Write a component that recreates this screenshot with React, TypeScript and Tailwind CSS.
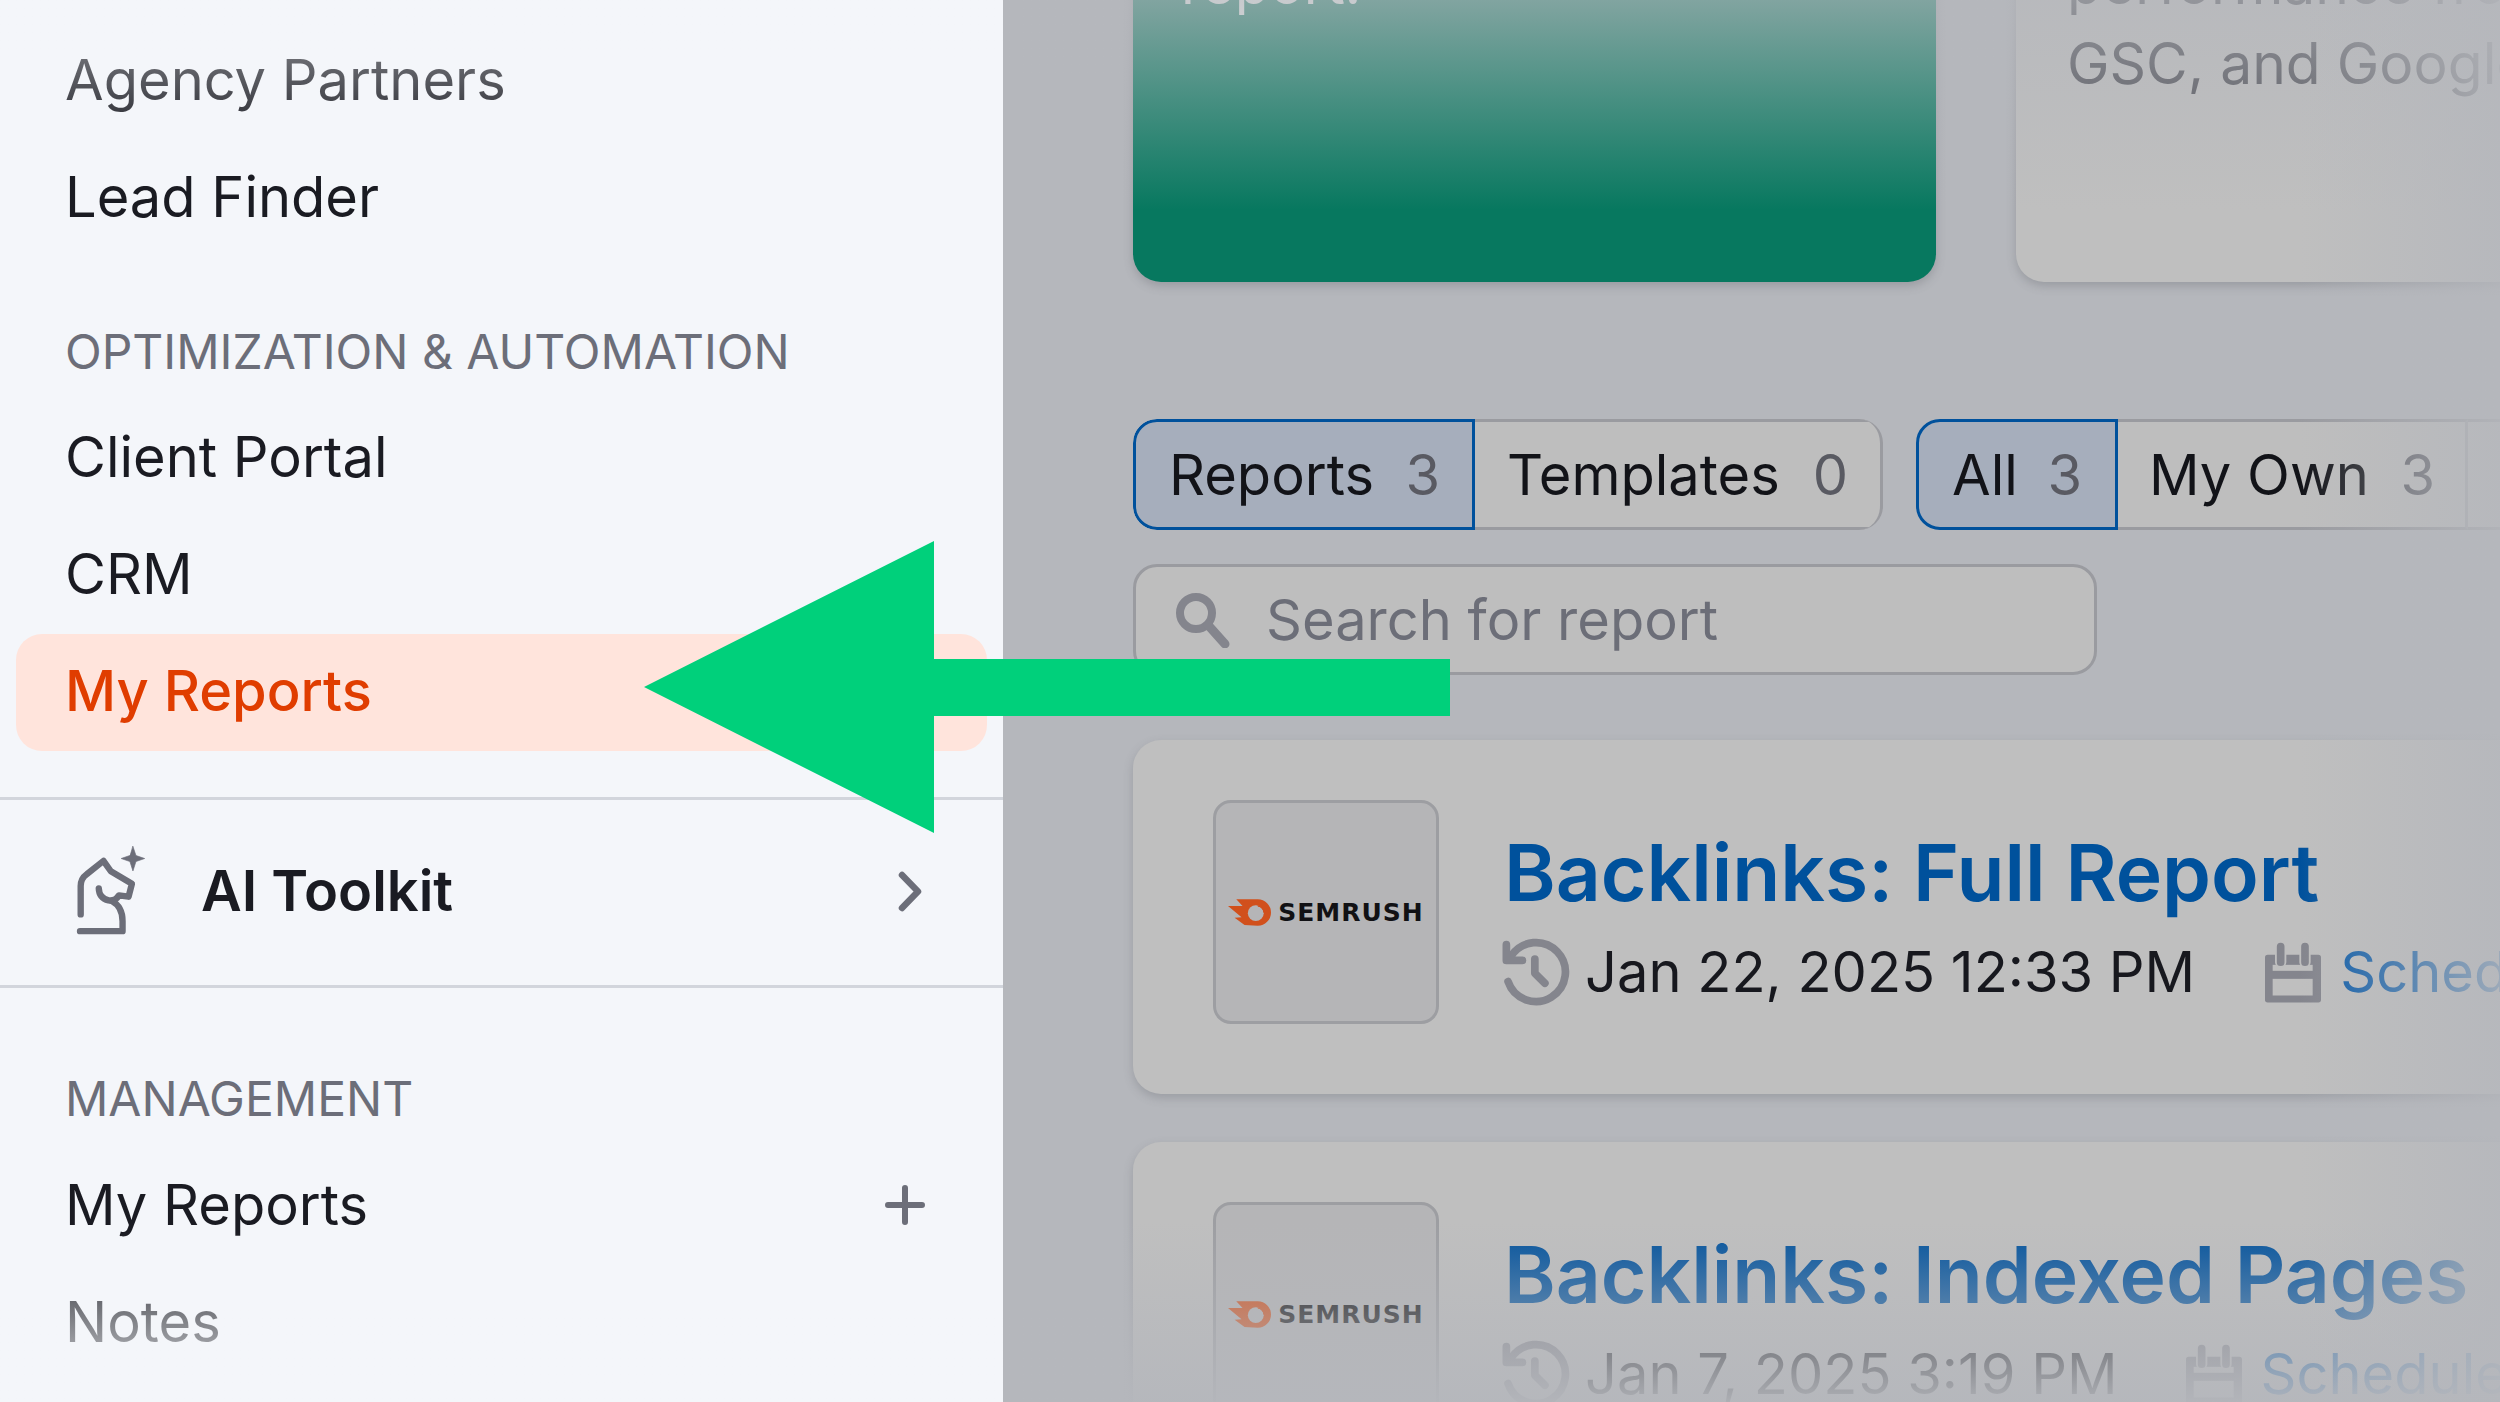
import React from "react";

const font = { fontFamily: '"Inter", "Noto Sans", sans-serif' };

function SideItem({ label, color = "text-[#1a1b22]" }: { label: string; color?: string }) {
  return <div className={`h-[117px] flex items-center pl-[65px] text-[56px] leading-none ${color}`}>{label}</div>;
}

function Heading({ label, className }: { label: string; className: string }) {
  return <div className={`pl-[65px] text-[48px] leading-none text-[#6c6e79] ${className}`}>{label}</div>;
}

function HorseIcon() {
  return (
    <svg viewBox="105 75 215 280" className="w-[72px] h-[94px]" fill="none" stroke="#6c6e79" strokeWidth="19" strokeLinecap="round" strokeLinejoin="round">
      <path d="M122 285 V200 Q122 178 140 165 L190 125 L212 156 L275 193 L265 232 L236 228 Q226 246 205 243 Q177 236 176 207" />
      <path d="M215 245 Q247 262 247 305 V335 H120" />
      <path d="M278 82 L287 109 L313 118 L287 127 L278 155 L269 127 L243 118 L269 109 Z" fill="#6c6e79" strokeWidth="2" />
    </svg>
  );
}

function SemrushLogo() {
  return (
    <div className="flex items-center gap-[7px]">
      <svg viewBox="80 325 130 80" className="w-[43px] h-[27px] shrink-0">
        <path d="M105 325 H170 A40 40 0 1 1 170 405 L130 403 L100 381 L121 379 L80 345 L124 345 Z" fill="#d1501c" />
        <circle cx="164" cy="367" r="24" fill="#b5b5b7" />
        <path d="M170 345 A22 22 0 0 1 189 365 A26 26 0 0 0 170 345 Z" fill="#d1501c" stroke="#d1501c" strokeWidth="3" />
      </svg>
      <span className="text-[25px] leading-none font-bold tracking-[1px] text-[#111114]" style={{ fontFamily: '"DejaVu Sans", sans-serif' }}>SEMRUSH</span>
    </div>
  );
}

function ClockIcon() {
  return (
    <svg viewBox="58 52 212 212" className="w-[71px] h-[71px] shrink-0" fill="none" stroke="#84858d" strokeWidth="23" strokeLinecap="round" strokeLinejoin="round">
      <path d="M85 185 A88 88 0 1 0 95 108" />
      <path d="M80 75 V122 H128" />
      <path d="M165 118 V160 L195 190" />
    </svg>
  );
}

function CalendarIcon() {
  return (
    <svg viewBox="75 62 168 182" className="w-[56px] h-[61px] shrink-0">
      <rect x="75" y="100" width="168" height="143" rx="8" fill="#84858d" />
      <rect x="98" y="130" width="120" height="18" fill="#bfbfbf" />
      <rect x="98" y="172" width="120" height="50" fill="#bfbfbf" />
      <path d="M122 75 V122 M195 75 V122" stroke="#bfbfbf" strokeWidth="34" strokeLinecap="round" />
      <path d="M122 75 V122 M195 75 V122" stroke="#84858d" strokeWidth="23" strokeLinecap="round" />
    </svg>
  );
}

function ReportCard({ title, date, gap }: { title: string; date: string; gap: string }) {
  return (
    <div className="w-[1500px] h-[354px] shrink-0 bg-[#bfbfbf] rounded-l-[28px] shadow-[0_4px_10px_rgba(90,92,100,0.28)] flex items-start pl-[80px] pt-[60px]">
      <div className="w-[226px] h-[224px] shrink-0 bg-[#b5b5b7] border-[3px] border-[#9d9ea2] rounded-[18px] flex items-center justify-center">
        <SemrushLogo />
      </div>
      <div className="ml-[65px]">
        <div className="h-[90px] flex items-center whitespace-nowrap text-[78.5px] leading-none font-semibold text-[#00519c] mt-[28px]">{title}</div>
        <div className="flex items-center h-[80px] mt-[14px] whitespace-nowrap text-[56px] leading-none text-[#17181e]">
          <span className="-ml-[5px]"><ClockIcon /></span>
          <span className="ml-[15px]">{date}</span>
          <span className={gap}><CalendarIcon /></span>
          <span className="ml-[19px] text-[#0b5ba8]">Schedule</span>
        </div>
      </div>
    </div>
  );
}

function Tab({ label, count, active, className }: { label: string; count: string; active?: boolean; className: string }) {
  return (
    <div className={`h-[111px] flex items-center justify-between shrink-0 text-[56px] leading-none text-[#121318] ${active ? "bg-[#a6aebc] border-[3px] border-[#00519c]" : "border-y-[3px] border-[#9a9ba0]"} ${className}`}>
      <span>{label}</span>
      <span className="text-[#595a62]">{count}</span>
    </div>
  );
}

export default function App() {
  return (
    <div className="relative w-[2500px] h-[1402px] flex overflow-hidden bg-[#b5b7bc]" style={font}>
      <aside className="relative w-[1003px] shrink-0 h-full bg-[#f4f6fa] overflow-hidden">
        <div className="pt-[21px]">
          <SideItem label="Agency Partners" />
          <SideItem label="Lead Finder" />
          <Heading label="OPTIMIZATION & AUTOMATION" className="h-[143px] flex items-end pb-[22px]" />
          <SideItem label="Client Portal" />
          <SideItem label="CRM" />
          <div className="relative h-[117px] mt-[2px] mx-[16px] pl-[49px] pb-[3px] flex items-center text-[56px] font-medium leading-none text-[#e03d00] bg-[#ffe4dc] rounded-[26px]">My Reports</div>
        </div>
        <div className="mt-[46px] border-y-[3px] border-[#d2d5dc] h-[191px] flex items-center pl-[75px] pr-[81px] pb-[3px]">
          <HorseIcon />
          <span className="ml-[54px] text-[56px] leading-none font-semibold text-[#1a1b22]">AI Toolkit</span>
          <svg viewBox="0 0 24 41" className="ml-auto w-[24px] h-[41px]" fill="none" stroke="#6c6e79" strokeWidth="6.5" strokeLinecap="round" strokeLinejoin="round">
            <path d="M4 4 L20 20.5 L4 37" />
          </svg>
        </div>
        <Heading label="MANAGEMENT" className="h-[159px] flex items-end pb-[24px]" />
        <div className="h-[116px] flex items-center justify-between pl-[65px] pr-[78px] text-[56px] leading-none text-[#1a1b22]">
          <span>My Reports</span>
          <svg viewBox="0 0 40 40" className="w-[40px] h-[40px]" fill="none" stroke="#6c6e79" strokeWidth="6" strokeLinecap="round">
            <path d="M20 3 V37 M3 20 H37" />
          </svg>
        </div>
        <SideItem label="Notes" />
        <div className="absolute inset-x-0 top-0 h-[150px] bg-gradient-to-b from-[#f4f6fa99] to-[#f4f6fa00]" />
        <div className="absolute inset-x-0 bottom-0 h-[170px] bg-gradient-to-t from-[#f4f6fae6] to-[#f4f6fa00]" />
      </aside>

      <main className="relative flex-1 h-full overflow-hidden pl-[130px]">
        <div className="-mt-[100px] flex gap-[80px]">
          <div className="w-[803px] h-[382px] shrink-0 rounded-[28px] bg-[#07785f] shadow-[0_4px_10px_rgba(90,92,100,0.3)] pl-[48px] pt-[44px] text-[57px] leading-[80px] text-[#f4f7f6]">report.</div>
          <div className="w-[800px] h-[382px] shrink-0 rounded-l-[28px] bg-[#bfbfbf] shadow-[0_4px_10px_rgba(90,92,100,0.3)] pl-[51px] pt-[44px] text-[57px] leading-[80px] text-[#45464e] whitespace-nowrap">
            <div>performance from</div>
            <div>GSC, and Google</div>
          </div>
        </div>

        <div className="mt-[137px] flex items-center">
          <div className="flex shrink-0 rounded-[24px] overflow-hidden bg-[#bebebe] border-r-[3px] border-[#9a9ba0]">
            <Tab label="Reports" count="3" active className="w-[342px] pl-[33px] pr-[32px] rounded-l-[24px]" />
            <Tab label="Templates" count="0" className="w-[405px] pl-[32px] pr-[32px]" />
          </div>
          <div className="ml-[33px] flex shrink-0 bg-[#bebebe] rounded-l-[24px] w-[700px]">
            <Tab label="All" count="3" active className="w-[202px] pl-[33px] pr-[33px] rounded-l-[24px]" />
            <Tab label="My Own" count="3" className="w-[350px] pl-[31px] pr-[30px] border-r-[3px] border-r-[#a4a5a9]" />
            <div className="flex-1 h-[111px] border-y-[3px] border-[#9a9ba0]" />
          </div>
        </div>

        <div className="mt-[34px] w-[964px] h-[111px] rounded-[24px] bg-[#bebebe] border-[3px] border-[#9a9ba0] flex items-center pl-[38px] text-[56px] leading-none text-[#6c6e78]">
          <svg viewBox="0 0 56 56" className="w-[56px] h-[56px] shrink-0" fill="none" stroke="#84858d" strokeLinecap="round">
            <circle cx="22" cy="21" r="16" strokeWidth="8" />
            <path d="M34 33 L51 52" strokeWidth="9" />
          </svg>
          <span className="ml-[36px]">Search for report</span>
        </div>

        <div className="mt-[65px] flex flex-col gap-[48px]">
          <ReportCard title="Backlinks: Full Report" date="Jan 22, 2025 12:33 PM" gap="ml-[70px]" />
          <ReportCard title="Backlinks: Indexed Pages" date="Jan 7, 2025 3:19 PM" gap="ml-[68px]" />
        </div>

        <div className="absolute inset-x-0 top-0 h-[210px] bg-gradient-to-b from-[#b5b7bcb3] to-[#b5b7bc00]" />
        <div className="absolute inset-x-0 bottom-0 h-[180px] bg-gradient-to-t from-[#b5b7bcf2] to-[#b5b7bc00]" />
        <div className="absolute inset-y-0 right-0 w-[200px] bg-gradient-to-l from-[#b5b7bcd9] to-[#b5b7bc00]" />
      </main>

      <svg viewBox="0 0 820 300" className="absolute left-[640px] top-[537px] w-[820px] h-[300px]">
        <path d="M4 150 L294 4 L294 122 L810 122 L810 179 L294 179 L294 296 Z" fill="#00d07b" />
      </svg>
    </div>
  );
}
